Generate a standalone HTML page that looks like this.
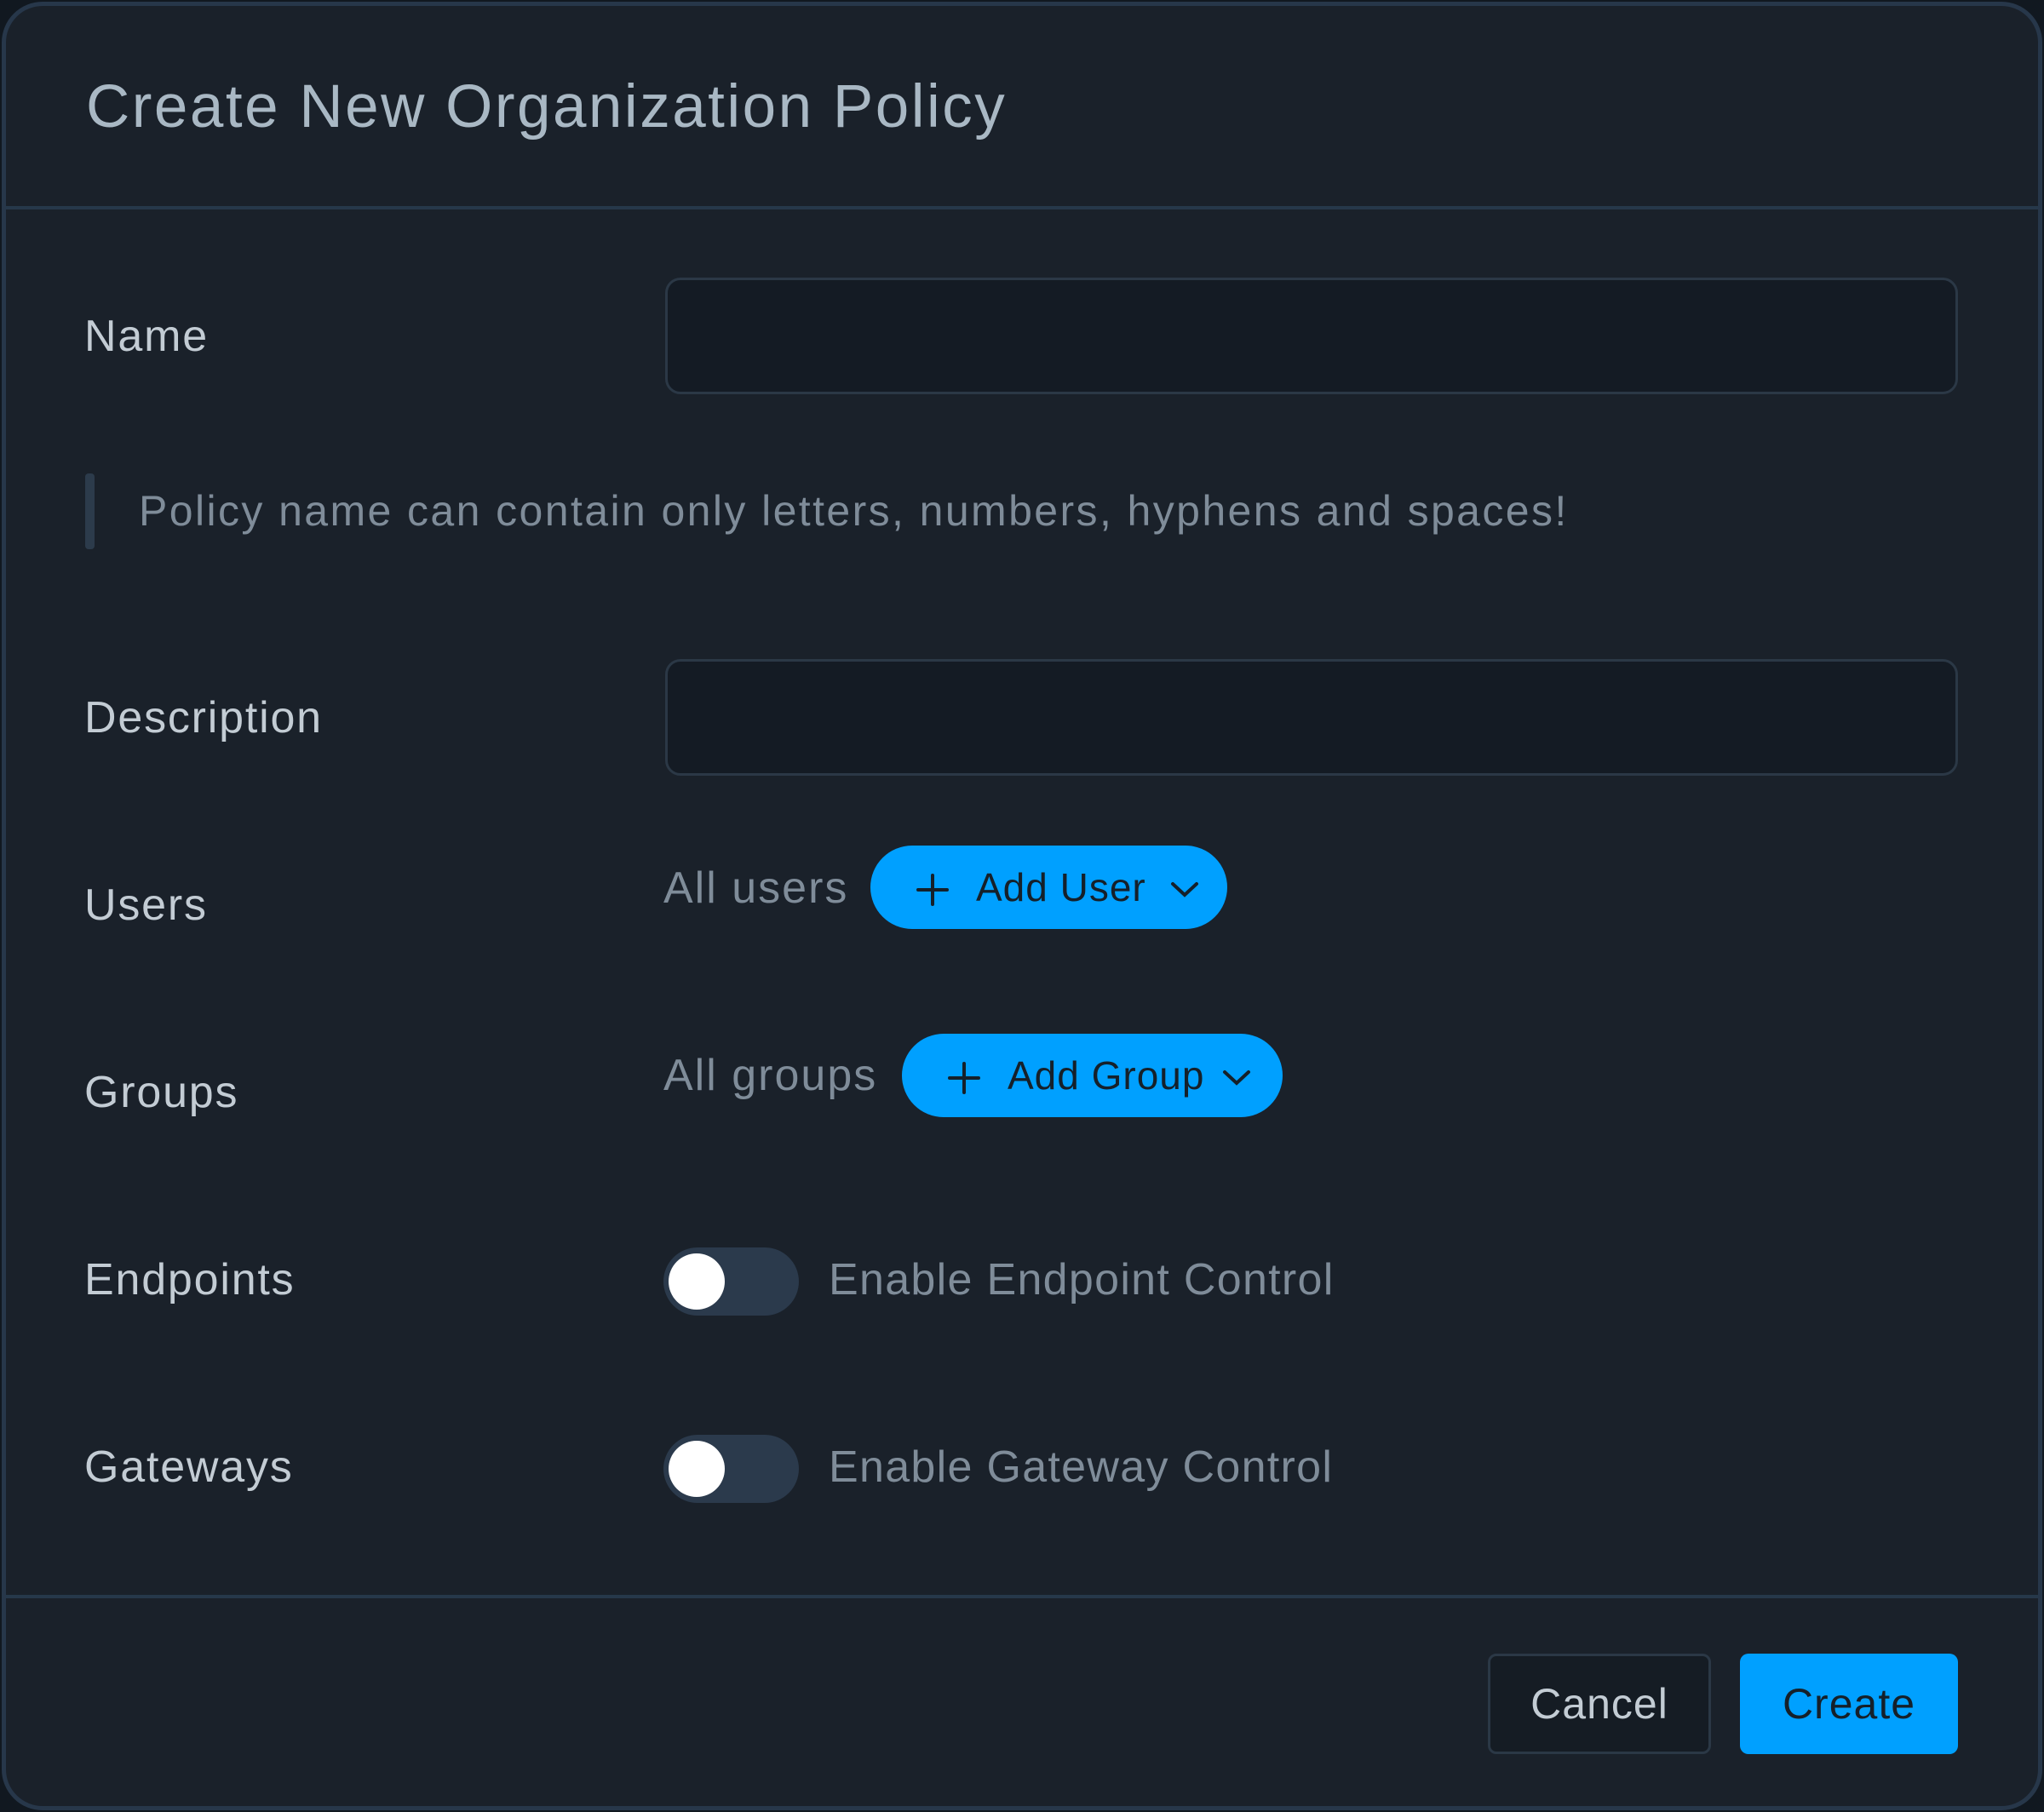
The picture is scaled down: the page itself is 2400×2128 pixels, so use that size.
<!DOCTYPE html>
<html><head><meta charset="utf-8"><style>
*{margin:0;padding:0;box-sizing:border-box}
html,body{width:2400px;height:2128px;background:#111820;overflow:hidden;font-family:"Liberation Sans",sans-serif}
.m{position:absolute;left:2px;top:2px;width:2396px;height:2124px;background:#1a212a;border:5px solid #27374a;border-radius:48px}
.a{position:absolute;white-space:nowrap}
.t{left:94px;top:78px;font-size:71px;color:#a9b8c4;letter-spacing:2.5px}
.hr{position:absolute;left:0;right:0;height:4px;background:#26384a}
.l{left:92px;font-size:52px;color:#c3ccd4;line-height:60px;letter-spacing:1.8px}
.in{position:absolute;left:774px;width:1518px;height:137px;background:#141b24;border:3px solid #2b3846;border-radius:18px}
.s{font-size:52px;color:#7f8c99;line-height:60px;letter-spacing:1.3px}
.btn{position:absolute;background:#00a0ff;border-radius:60px;color:#15202a;font-size:46px;display:flex;align-items:center;letter-spacing:1px}
.tg{position:absolute;left:772px;width:159px;height:80px;background:#2b3a4c;border-radius:40px}
.tg:after{content:"";position:absolute;left:6px;top:7px;width:66px;height:66px;border-radius:50%;background:#fff}
</style></head><body>
<div class="m">
<div class="a t">Create New Organization Policy</div>
<div class="hr" style="top:235px"></div>
<div class="a l" style="top:358px">Name</div>
<div class="in" style="top:319px"></div>
<div style="position:absolute;left:93px;top:549px;width:11px;height:89px;background:#2c3b4b;border-radius:4px"></div>
<div class="a s" style="left:156px;top:563px;font-size:50px;letter-spacing:2.4px">Policy name can contain only letters, numbers, hyphens and spaces!</div>
<div class="a l" style="top:806px">Description</div>
<div class="in" style="top:767px"></div>
<div class="a l" style="top:1026px">Users</div>
<div class="a s" style="left:772px;top:1006px;letter-spacing:2px">All users</div>
<div class="btn" style="left:1015px;top:986px;width:419px;height:98px">
<svg style="position:absolute;left:54px;top:33px" width="38" height="38" viewBox="0 0 38 38"><path d="M19 2V36M2 19H36" stroke="#15202a" stroke-width="4" stroke-linecap="round"/></svg>
<span style="position:absolute;left:124px">Add User</span>
<svg style="position:absolute;left:352px;top:42px" width="34" height="20" viewBox="0 0 34 20"><path d="M3 3L17 16L31 3" stroke="#15202a" stroke-width="4" fill="none" stroke-linecap="round"/></svg>
</div>
<div class="a l" style="top:1246px">Groups</div>
<div class="a s" style="left:772px;top:1226px;letter-spacing:2px">All groups</div>
<div class="btn" style="left:1052px;top:1207px;width:447px;height:98px">
<svg style="position:absolute;left:54px;top:33px" width="38" height="38" viewBox="0 0 38 38"><path d="M19 2V36M2 19H36" stroke="#15202a" stroke-width="4" stroke-linecap="round"/></svg>
<span style="position:absolute;left:124px">Add Group</span>
<svg style="position:absolute;left:376px;top:42px" width="34" height="20" viewBox="0 0 34 20"><path d="M3 3L17 16L31 3" stroke="#15202a" stroke-width="4" fill="none" stroke-linecap="round"/></svg>
</div>
<div class="a l" style="top:1466px">Endpoints</div>
<div class="tg" style="top:1458px"></div>
<div class="a s" style="left:966px;top:1466px">Enable Endpoint Control</div>
<div class="a l" style="top:1686px">Gateways</div>
<div class="tg" style="top:1678px"></div>
<div class="a s" style="left:966px;top:1686px">Enable Gateway Control</div>
<div class="hr" style="top:1866px"></div>
<div style="position:absolute;left:1740px;top:1935px;width:262px;height:118px;border:3px solid #2b3846;border-radius:10px;background:#151c24;color:#c3ccd4;font-size:50px;display:flex;align-items:center;justify-content:center;letter-spacing:1px">Cancel</div>
<div style="position:absolute;left:2036px;top:1935px;width:256px;height:118px;border-radius:10px;background:#00a0ff;color:#15202a;font-size:50px;display:flex;align-items:center;justify-content:center;letter-spacing:1px">Create</div>
</div>
</body></html>
